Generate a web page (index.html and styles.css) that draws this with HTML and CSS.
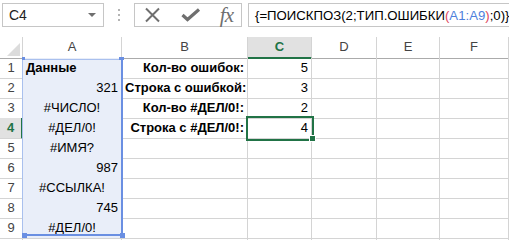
FILE: index.html
```html
<!DOCTYPE html>
<html lang="ru">
<head>
  <meta charset="UTF-8" />
  <title>ПОИСКПОЗ и ТИП.ОШИБКИ</title>
  <link rel="stylesheet" href="styles.css">
</head>
<body>

<div class="toolbar">
  <div class="namebox">
    <span>C4</span>
    <span class="arrow"></span>
  </div>
  <div class="dots"><i></i><i></i><i></i></div>
  <div class="fxbox">
    <svg class="icon" width="18" height="16" viewBox="0 0 18 16">
      <path d="M2 1.5 L15 14.5 M15 1.5 L2 14.5" stroke="#6f6f6f" stroke-width="2" fill="none"/>
    </svg>
    <svg class="icon" width="20" height="14" viewBox="0 0 20 14">
      <path d="M1.5 7 L6.5 11.5 L18 1.5" stroke="#6f6f6f" stroke-width="3.2" fill="none"/>
    </svg>
    <span class="fx">fx</span>
  </div>
  <div class="formula">{=ПОИСКПОЗ(2;ТИП.ОШИБКИ<span class="paren">(</span><span class="ref">A1:A9</span><span class="paren">)</span>;0)}</div>
</div>

<div class="sheet">
  <div class="row head">
    <div class="corner"><span></span></div>
    <div class="col">A</div>
    <div class="col">B</div>
    <div class="col cur">C</div>
    <div class="col">D</div>
    <div class="col">E</div>
    <div class="col">F</div>
  </div>
  <div class="row">
    <div class="num">1</div>
    <div class="cell a bold left">Данные</div>
    <div class="cell bold">Кол-во ошибок:</div>
    <div class="cell">5</div>
    <div class="cell"></div><div class="cell"></div><div class="cell"></div>
  </div>
  <div class="row">
    <div class="num">2</div>
    <div class="cell a">321</div>
    <div class="cell bold">Строка с ошибкой:</div>
    <div class="cell">3</div>
    <div class="cell"></div><div class="cell"></div><div class="cell"></div>
  </div>
  <div class="row">
    <div class="num">3</div>
    <div class="cell a center">#ЧИСЛО!</div>
    <div class="cell bold">Кол-во #ДЕЛ/0!:</div>
    <div class="cell">2</div>
    <div class="cell"></div><div class="cell"></div><div class="cell"></div>
  </div>
  <div class="row">
    <div class="num cur">4</div>
    <div class="cell a center">#ДЕЛ/0!</div>
    <div class="cell bold">Строка с #ДЕЛ/0!:</div>
    <div class="cell active">4</div>
    <div class="cell"></div><div class="cell"></div><div class="cell"></div>
  </div>
  <div class="row">
    <div class="num">5</div>
    <div class="cell a center">#ИМЯ?</div>
    <div class="cell"></div><div class="cell"></div>
    <div class="cell"></div><div class="cell"></div><div class="cell"></div>
  </div>
  <div class="row">
    <div class="num">6</div>
    <div class="cell a">987</div>
    <div class="cell"></div><div class="cell"></div>
    <div class="cell"></div><div class="cell"></div><div class="cell"></div>
  </div>
  <div class="row">
    <div class="num">7</div>
    <div class="cell a center">#ССЫЛКА!</div>
    <div class="cell"></div><div class="cell"></div>
    <div class="cell"></div><div class="cell"></div><div class="cell"></div>
  </div>
  <div class="row">
    <div class="num">8</div>
    <div class="cell a">745</div>
    <div class="cell"></div><div class="cell"></div>
    <div class="cell"></div><div class="cell"></div><div class="cell"></div>
  </div>
  <div class="row">
    <div class="num">9</div>
    <div class="cell a center">#ДЕЛ/0!</div>
    <div class="cell"></div><div class="cell"></div>
    <div class="cell"></div><div class="cell"></div><div class="cell"></div>
  </div>
  <div class="row stub">
    <div class="num"></div>
    <div class="cell"></div><div class="cell"></div><div class="cell"></div>
    <div class="cell"></div><div class="cell"></div><div class="cell"></div>
  </div>

  <!-- range picked by the formula A1:A9 -->
  <div class="range">
    <i class="h tl"></i><i class="h tr"></i><i class="h bl"></i><i class="h br"></i>
  </div>
</div>

</body>
</html>
```

FILE: styles.css
```css
body {
  margin: 0;
  background: #fff;
  font-family: "Liberation Sans", Arial, sans-serif;
  color: #000;
  width: 509px;
  height: 240px;
  overflow: hidden;
}

/* formula bar */
.toolbar {
  display: flex;
  align-items: flex-start;
  height: 37px;
  padding: 3px 0 0 2px;
  box-sizing: border-box;
}
.namebox, .fxbox, .formula {
  height: 24px;
  box-sizing: border-box;
  border: 1px solid #c6c6c6;
  display: flex;
  align-items: center;
}
.namebox {
  width: 102px;
  padding: 0 0 0 6px;
  font-size: 14px;
  color: #222;
  justify-content: space-between;
}
.arrow {
  width: 0;
  height: 0;
  border-left: 4px solid transparent;
  border-right: 4px solid transparent;
  border-top: 4px solid #6f6f6f;
  margin-right: 7px;
}
.dots {
  width: 30px;
  display: flex;
  flex-direction: column;
  align-items: center;
  gap: 3px;
  padding-top: 6px;
}
.dots i {
  width: 2px;
  height: 2px;
  background: #b4b4b4;
}
.fxbox {
  width: 108px;
  padding: 0 8px 0 9px;
  justify-content: space-between;
}
.fx {
  font-family: "Liberation Serif", "Times New Roman", serif;
  font-style: italic;
  font-size: 21px;
  color: #6f6f6f;
  line-height: 20px;
  letter-spacing: -1px;
}
.formula {
  flex: 1;
  margin-left: 6px;
  border-right: none;
  padding-left: 6px;
  font-size: 13.2px;
  white-space: nowrap;
  overflow: hidden;
}
.paren { color: #e0465a; }
.ref { color: #4f7fdc; }

/* grid */
.sheet {
  position: relative;
  font-size: 13px;
}
.row {
  display: grid;
  grid-template-columns: 23px 99px 126px 64px 65px 63px 69px;
  height: 20px;
}
.row.stub {
  height: 3px;
}
.row > div {
  box-sizing: border-box;
  border-right: 1px solid #d4d4d4;
  border-bottom: 1px solid #d4d4d4;
}
.head {
  height: 21px;
}
.head > div {
  border-bottom-color: #ababab;
  color: #444;
  text-align: center;
  line-height: 20px;
}
.corner {
  position: relative;
}
.corner span {
  position: absolute;
  right: 2px;
  bottom: 2px;
  width: 0;
  height: 0;
  border-left: 13px solid transparent;
  border-bottom: 13px solid #dcdcdc;
}
.col.cur {
  background: #e1e1e1;
  color: #217346;
  font-weight: bold;
  border-bottom: 2px solid #217346;
}
.num {
  text-align: center;
  color: #444;
  line-height: 20px;
  font-size: 13px;
}
.num.cur {
  background: #e1e1e1;
  color: #217346;
  font-weight: bold;
  border-right: 2px solid #217346;
}
.cell {
  text-align: right;
  padding: 0 3px;
  line-height: 19px;
  white-space: nowrap;
}
.cell.a { background: #e9eef9; }
.bold { font-weight: bold; }
.left { text-align: left; }
.center { text-align: center; }
.active {
  position: relative;
  z-index: 2;
  outline: 2px solid #217346;
  outline-offset: 0;
}
.active::after {
  content: "";
  position: absolute;
  right: -5px;
  bottom: -4px;
  width: 5px;
  height: 5px;
  background: #217346;
  border: 1px solid #fff;
}

/* range highlight over column A */
.range {
  position: absolute;
  left: 22px;
  top: 22px;
  width: 101px;
  height: 177px;
  box-sizing: border-box;
  border: 1px solid #a9c0ee;
  border-right: 2px solid #6a8fe2;
  border-bottom: 2px solid #6a8fe2;
  pointer-events: none;
}
.h {
  position: absolute;
  width: 5px;
  height: 5px;
  background: #6a8fe2;
}
.tl { left: -1px; top: -3px; width: 3px; height: 3px; }
.tr { right: -3px; top: -3px; height: 3px; }
.bl { left: -1px; bottom: -4px; }
.br { right: -4px; bottom: -4px; }
```
